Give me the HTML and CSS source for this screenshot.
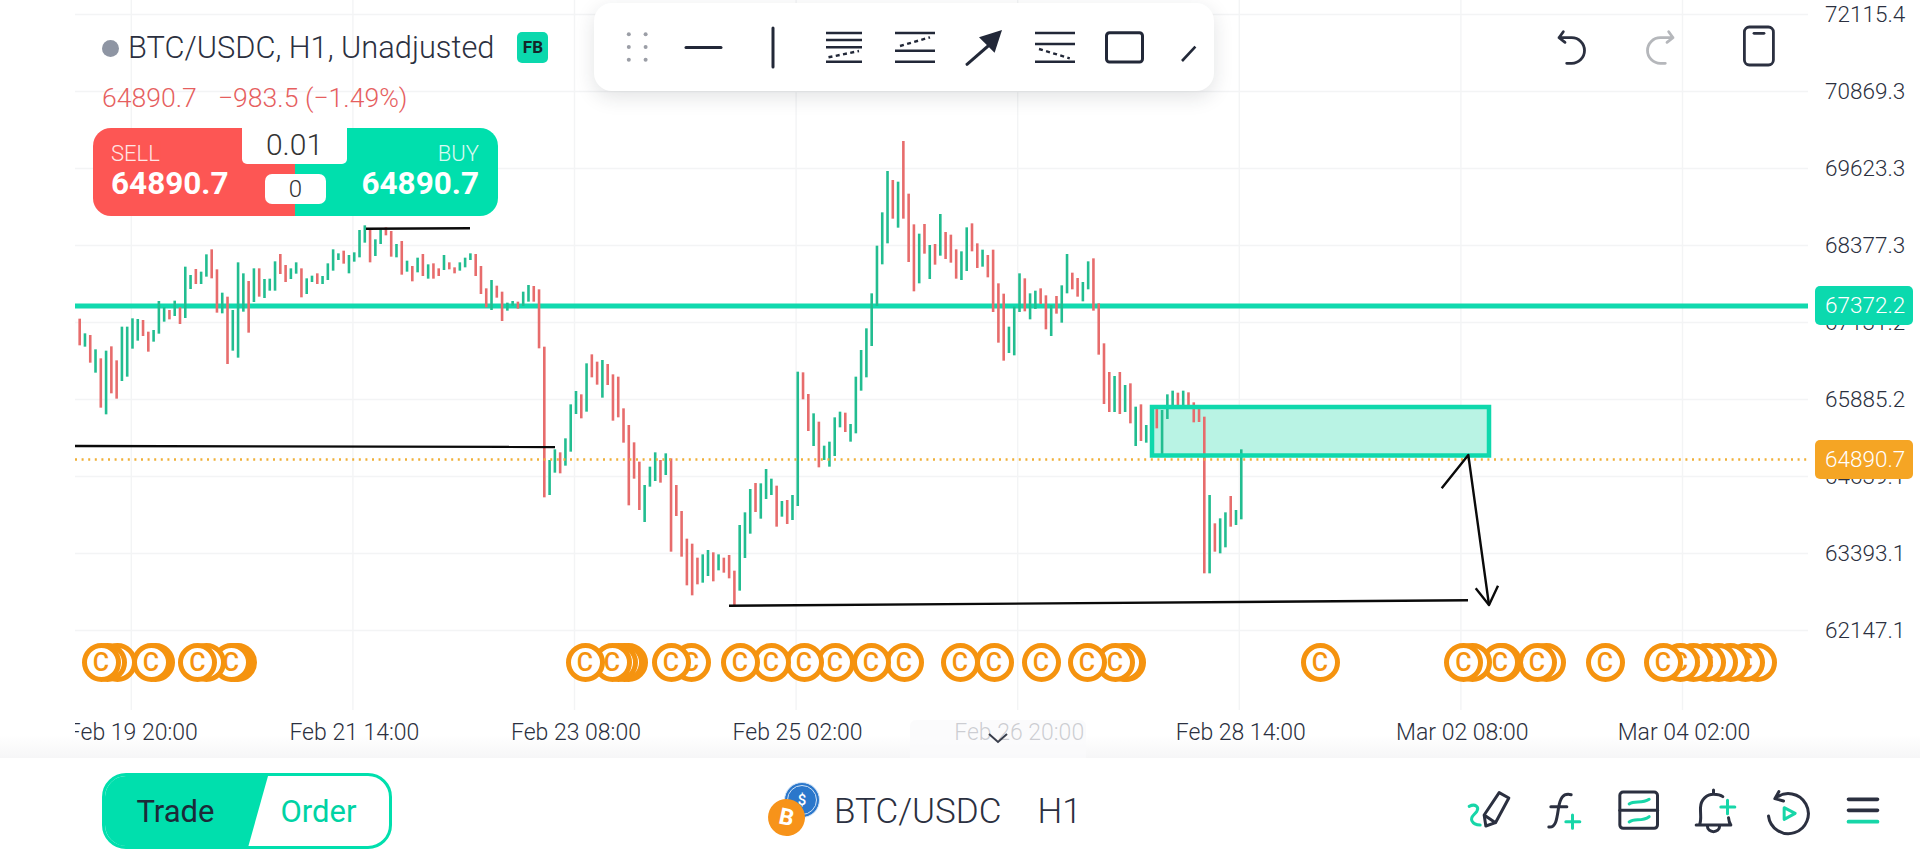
FILE: index.html
```html
<!DOCTYPE html>
<html lang="en">
<head>
<meta charset="utf-8">
<title>BTC/USDC H1</title>
<link rel="stylesheet" href="styles.css">
</head>
<body>
<div class="app">
  <main class="chart">
    <svg class="plot" id="plot" width="1920" height="758" viewBox="0 0 1920 758">
      <g class="grid" id="grid"></g>
      <rect class="zone-fill" x="1152" y="407" width="337" height="48.5"/>
      <line class="level" x1="75" y1="306" x2="1808" y2="306"/>
      <g id="bars"></g>
      <rect class="zone-edge" x="1152" y="407" width="337" height="48.5"/>
      <line class="last" x1="75" y1="459.5" x2="1808" y2="459.5"/>
      <g class="ink">
        <path d="M366 228.7L470 228.3"/>
        <path d="M75 446L555 447"/>
        <path d="M729 605.7L1468 600.3"/>
        <path d="M1441.7 488.3L1468.3 455L1489 605"/>
        <path d="M1475.7 588.3L1489 605L1498 585.7"/>
      </g>
    </svg>

    <div class="coins" id="coins"></div>

    <div class="price-axis">
      <span>72115.4</span><span>70869.3</span><span>69623.3</span><span>68377.3</span><span>67131.2</span><span>65885.2</span><span>64639.1</span><span>63393.1</span><span>62147.1</span>
    </div>
    <div class="tag tag-level">67372.2</div>
    <div class="tag tag-last">64890.7</div>

    <div class="time-axis">
      <div class="time-row">
        <span>Feb 19 20:00</span><span>Feb 21 14:00</span><span>Feb 23 08:00</span><span>Feb 25 02:00</span><span>Feb 26 20:00</span><span>Feb 28 14:00</span><span>Mar 02 08:00</span><span>Mar 04 02:00</span>
      </div>
    </div>
    <div class="collapse">
      <svg width="24" height="12" viewBox="0 0 24 12"><path d="M3 2L12 10L21 2"/></svg>
    </div>

    <header class="legend">
      <div class="legend-title">
        <i class="status-dot"></i>
        <span>BTC/USDC, H1, Unadjusted</span>
        <b class="fb">FB</b>
      </div>
      <div class="legend-quote"><span>64890.7</span><span>−983.5 (−1.49%)</span></div>
      <div class="ticket">
        <div class="side sell"><small>SELL</small><strong>64890.7</strong></div>
        <div class="side buy"><small>BUY</small><strong>64890.7</strong></div>
        <div class="lots">0.01</div>
        <div class="spread">0</div>
      </div>
    </header>

    <nav class="tools">
      <svg class="tool" viewBox="-25 -25 50 50"><g class="dots"><circle cx="-3.2" cy="-12.7" r="2"/><circle cx="13.6" cy="-12.7" r="2"/><circle cx="-3.2" cy="0" r="2"/><circle cx="13.6" cy="0" r="2"/><circle cx="-3.2" cy="12.7" r="2"/><circle cx="13.6" cy="12.7" r="2"/></g></svg>
      <svg class="tool" viewBox="-25 -25 50 50"><path class="st" d="M-18 0.5H17"/></svg>
      <svg class="tool" viewBox="-25 -25 50 50"><path class="st" d="M0 -19V20"/></svg>
      <svg class="tool" viewBox="-25 -25 50 50"><path class="st th" d="M-18 -14H18M-18 -7H18M-18 0.3H18M-18 14.7H18"/><path class="dash" d="M-15.5 10.3L15 4"/></svg>
      <svg class="tool" viewBox="-25 -25 50 50"><path class="st th" d="M-20 -14H20M-20 3.7H20M-20 14.7H20"/><path class="dash" d="M-15 -1L15 -9.7"/></svg>
      <svg class="tool" viewBox="-25 -25 50 50"><path class="st" d="M-20 17.3L8 -7"/><path class="fillp" d="M15 -17L-8 -9.7L7.6 5.7Z"/></svg>
      <svg class="tool" viewBox="-25 -25 50 50"><path class="st th" d="M-21 -14H19M-21 -3H19M-21 14.7H19"/><path class="dash" d="M-17 2L13.8 11.3"/></svg>
      <svg class="tool" viewBox="-25 -25 50 50"><rect class="st" x="-16.5" y="-14.3" width="36" height="29.3" rx="3"/></svg>
      <svg class="tool" viewBox="-25 -25 50 50"><path class="st butt" d="M-3 14L10.4 -0.3"/></svg>
    </nav>

    <div class="actions">
      <svg class="act undo" viewBox="0 0 44 44"><path d="M13.3 3.7L9 9.7L15 14.3M9 9.7H21.7a12.8 12.8 0 0 1 0 25.6H16.7"/></svg>
      <svg class="act redo" viewBox="0 0 44 44"><path d="M30.7 3.7L35 9.7L29 14.3M35 9.7H22.3a12.8 12.8 0 0 0 0 25.6H27.3"/></svg>
      <svg class="act device" viewBox="0 0 44 44"><rect x="7.4" y="-1" width="29" height="38" rx="5"/><path d="M17 5.3H27"/></svg>
    </div>
  </main>

  <footer class="nav">
    <div class="toggle">
      <span class="toggle-on">Trade</span>
      <span class="toggle-off">Order</span>
    </div>
    <div class="symbol">
      <div class="pair">
        <span class="coin-usdc">$</span>
        <span class="coin-btc">B</span>
      </div>
      <span class="symbol-name">BTC/USDC</span>
      <span class="symbol-tf">H1</span>
    </div>
    <div class="nav-icons">
      <svg class="nav-icon" viewBox="92.5 80 225 150"><path class="tl" d="M147 141C165 132 178 142 170 156C162 168 150 172 155 184C160 195 170 197 180 197"/><path class="dk" d="M192 167L237 100L266 116L226 190L197 200ZM192 167L226 190"/></svg>
      <svg class="nav-icon" viewBox="322.5 80 225 150"><path class="dk" d="M458 106C432 100 425 118 420 146C415 180 412 206 391 203M397 142H445"/><path class="tl" d="M462 167V207M442 187H484"/></svg>
      <svg class="nav-icon" viewBox="543.5 80 225 150"><rect class="dk" x="600" y="98" width="113" height="109" rx="10"/><path class="dk" d="M600 153H713"/><path class="tl" d="M628 134C645 122 665 135 688 120M628 188C645 176 665 188 688 172"/></svg>
      <svg class="nav-icon" viewBox="767.5 80 225 150"><path class="dk" d="M828 197H932M838 197C845 180 840 165 841 145C842 120 860 105 880 105C890 105 900 106 908 112M925 175C926 185 928 192 932 197M880 92V105M862 202A18 15 0 0 0 898 202"/><path class="tl" d="M922 123V163M902 143H944"/></svg>
      <svg class="nav-icon" viewBox="992.5 80 225 150"><path class="dk" d="M1066 117A60 60 0 1 1 1045 170M1076 97L1064 118L1090 125"/><path class="tl" d="M1092 145L1125 162L1092 180Z"/></svg>
      <svg class="nav-icon" viewBox="1217.5 80 225 150"><path class="dk bar" d="M1285 120H1372M1285 153H1372"/><path class="tl bar" d="M1285 187H1372"/></svg>
    </div>
  </footer>
</div>
<script src="chart.js"></script>
</body>
</html>
```

FILE: styles.css
```css
* { box-sizing: border-box; }
html, body { margin: 0; padding: 0; background: #fff; overflow: hidden; }
body { font-family: Roboto, "Noto Sans", "Liberation Sans", sans-serif; color: #2b3040; }
.app { width: 1920px; height: 864px; display: flex; flex-direction: column; }

.chart { position: relative; height: 758px; flex: none; overflow: hidden; background: linear-gradient(#fff 735px, #f6f6f7 758px); }
.plot { position: absolute; left: 0; top: 0; }
.grid line { stroke: #f3f4f5; stroke-width: 1.4; }
.zone-fill { fill: #b9f3e4; }
.zone-edge { fill: none; stroke: #0fd8ac; stroke-width: 4.5; }
.level { stroke: #11d9ae; stroke-width: 5; }
.last { stroke: #f0b038; stroke-width: 2.4; stroke-dasharray: 2 4.6; }
.ink path { fill: none; stroke: #0a0a0a; stroke-width: 2.4; stroke-linejoin: round; }
.bar-red { stroke: #e76c6c; stroke-width: 2.6; }
.bar-green { stroke: #22bd90; stroke-width: 2.6; }

.coins { position: absolute; left: 0; top: 0; width: 100%; height: 100%; pointer-events: none; }
.coin { position: absolute; top: 642.5px; width: 39px; height: 39px; border: 5px solid #f5930f; border-radius: 50%; background: #fff; color: #f5930f; font-size: 25px; font-weight: 500; line-height: 29px; text-align: center; }

.price-axis { position: absolute; left: 1825px; top: -24px; display: flex; flex-direction: column; font-size: 22.5px; font-weight: 300; }
.price-axis span { height: 77px; line-height: 77px; color: #2b3040; }
.tag { position: absolute; left: 1815px; width: 98px; height: 39px; border-radius: 5px; color: #fff; font-size: 22.5px; font-weight: 300; line-height: 39px; padding-left: 10px; }
.tag-level { top: 286px; background: #0bd9ae; }
.tag-last { top: 440px; background: #f5a524; }

.time-axis { position: absolute; left: 75px; top: 718px; width: 1733px; height: 30px; overflow: hidden; }
.time-row { display: flex; margin-left: -53px; }
.time-row span { flex: 0 0 221.6px; text-align: center; font-size: 23px; font-weight: 300; line-height: 30px; color: #2b3040; white-space: nowrap; }
.collapse { position: absolute; left: 910px; top: 720px; width: 176px; height: 38px; border-radius: 6px 6px 0 0; background: rgba(250,250,251,.78); display: flex; justify-content: center; padding-top: 12px; }
.collapse path { fill: none; stroke: #3a3f4c; stroke-width: 2; }

.legend { position: absolute; left: 93px; top: 25px; width: 470px; }
.legend-title { display: flex; align-items: center; height: 44px; margin-left: 9px; font-size: 30.8px; font-weight: 300; color: #2b3040; }
.status-dot { width: 17px; height: 17px; border-radius: 50%; background: #8e95a3; margin-right: 9px; margin-top: 3px; }
.fb { margin-left: 23px; width: 31px; height: 31px; border-radius: 5px; background: #0bd8ad; color: #14252a; font-size: 17px; line-height: 31px; text-align: center; font-weight: 700; }
.legend-quote { display: flex; gap: 21px; margin-left: 9px; margin-top: 7px; font-size: 26.6px; font-weight: 300; line-height: 44px; height: 44px; color: #e65f5f; }

.ticket { position: relative; width: 405px; height: 88px; margin-top: 8px; border-radius: 18px; overflow: hidden; display: flex; color: #fff; }
.side { display: flex; flex-direction: column; padding-top: 12px; }
.side small { font-size: 22px; font-weight: 300; line-height: 28px; opacity: .85; }
.side strong { font-size: 31.5px; font-weight: 700; line-height: 32px; }
.sell { width: 202px; background: #fd5654; padding-left: 18px; }
.buy { flex: 1; background: #00dfad; align-items: flex-end; padding-right: 19px; }
.lots { position: absolute; left: 149px; top: 0; width: 105px; height: 36px; background: #fff; border-radius: 0 0 5px 5px; color: #333; font-size: 30px; font-weight: 300; line-height: 33px; text-align: center; }
.spread { position: absolute; left: 172px; top: 46px; width: 61px; height: 30px; background: #fff; border-radius: 7px; color: #333; font-size: 24px; font-weight: 300; line-height: 30px; text-align: center; }

.tools { position: absolute; left: 593.5px; top: 3px; width: 620px; height: 88px; background: #fff; border-radius: 18px; box-shadow: 0 6px 20px rgba(30,35,50,.13); display: grid; grid-template-columns: 76.2px 68.1px 70.5px 70.5px 73.2px 70.3px 67.5px 67.2px 56.4px; align-items: center; }
.tool { width: 50px; height: 50px; justify-self: center; overflow: visible; }
.st { fill: none; stroke: #222838; stroke-width: 3; stroke-linecap: round; stroke-linejoin: round; }
.st.th { stroke-width: 2.6; stroke-linecap: butt; }
.st.butt { stroke-width: 2.6; stroke-linecap: butt; }
.dash { fill: none; stroke: #222838; stroke-width: 2.4; stroke-dasharray: 4 3.4; }
.fillp { fill: #222838; }
.dots circle { fill: #9b9ea6; }

.actions { position: absolute; left: 1550px; top: 28px; display: flex; gap: 44px; }
.act { width: 44px; height: 44px; overflow: visible; }
.act path, .act rect { fill: none; stroke: #2b3040; stroke-width: 2.8; stroke-linecap: round; stroke-linejoin: round; }
.redo path { stroke: #b5b7bb; }
.device { margin-left: 11px; }

.nav { height: 106px; flex: none; display: flex; align-items: center; padding: 0 19.5px 0 102px; background: #fff; }
.toggle { position: relative; width: 290px; height: 76px; border: 3px solid #00dfad; border-radius: 24px; overflow: hidden; display: flex; align-items: center; font-size: 31px; background: #fff; }
.toggle::before { content: ""; position: absolute; left: 0; top: 0; bottom: 0; width: 163px; background: #00dfad; clip-path: polygon(0 0, 100% 0, 88% 100%, 0 100%); }
.toggle-on { position: relative; width: 141px; text-align: center; font-weight: 400; color: #1c2a38; }
.toggle-off { position: relative; flex: 1; text-align: center; font-weight: 400; color: #00d3a4; padding-left: 2px; }

.symbol { display: flex; align-items: center; margin-left: 376px; font-size: 35px; font-weight: 300; color: #2b3040; }
.pair { position: relative; width: 54px; height: 58px; margin-right: 12px; }
.coin-usdc { position: absolute; left: 16px; top: 0; width: 36px; height: 36px; border-radius: 50%; background: #2b77cb; border: 4px double #cfe2f6; color: #fff; font-size: 15px; font-weight: 500; line-height: 28px; text-align: center; }
.coin-btc { position: absolute; left: 0; top: 17px; width: 37px; height: 37px; border-radius: 50%; background: #f7931a; color: #fff; font-size: 23px; font-weight: 700; line-height: 37px; text-align: center; transform: rotate(12deg); }
.symbol-tf { margin-left: 36px; }

.nav-icons { margin-left: auto; display: flex; }
.nav-icon { width: 75px; height: 50px; }
.dk, .tl { fill: none; stroke-width: 9; stroke-linecap: round; stroke-linejoin: round; }
.dk { stroke: #2b3040; }
.tl { stroke: #17d6a8; }
.bar { stroke-width: 11; }
```

FILE: chart.js
```js
(function () {
  var NS = 'http://www.w3.org/2000/svg';
  var X0 = 74.4, STEP = 5.28;
  var R = 'r', G = 'g';

  // [colour, top, bottom] in crop units; each set is [originY, scale, rows]
  var sets = [
    [220, 3, [
      [R,295,372],[R,296,376],[G,340,380],[R,345,428],[G,388,458],[R,415,563],[G,392,583],[R,379,520],[R,421,536],[G,320,483],
      [G,320,470],[G,295,386],[G,297,362],[R,300,348],[R,335,395],[G,330,365],[G,243,341],[G,262,305],[R,270,298],[G,242,288],
      [R,262,312],[G,140,294],[G,165,207],[R,147,192],[G,155,192],[G,103,170],[R,88,175],[R,148,278],[G,218,280],[R,230,432],
      [G,270,392],[G,127,413],[G,160,275],[R,183,338],[G,145,246],[R,145,230],[G,177,234],[G,176,212],[G,124,212],[R,102,162],
      [R,135,186],[G,145,177],[G,127,161],[R,145,232],[G,175,222],[G,167,186],[R,160,192],[G,168,192],[G,130,180],[G,88,152],
      [G,100,120],[R,92,131],[G,105,160],[G,97,125],[G,30,112],[G,16,68],[R,28,127],[G,58,108],[G,28,72],[R,22,46],
      [R,33,110],[G,72,112],[R,63,164],[G,122,155],[R,138,184],[G,113,157],[R,102,168],[G,133,176],[R,130,176],[R,145,168],
      [G,105,150],[R,127,148],[R,142,160],[G,127,152],[G,113,142],[G,100,120],[R,102,168],[R,138,222],[R,205,262],[G,180,270],
      [R,197,233],[R,215,303],[G,248,272],[G,243,257],[R,245,266],[G,215,258],[G,195,245],[R,198,245],[R,208,385]
    ]],
    [320, 3, [
      [R,80,532],[G,420,525],[G,388,458],[R,397,460],[G,355,437],[G,253,395],[G,213,282],[R,223,295],[G,130,275],[R,103,172],
      [R,125,194],[G,120,233],[R,132,195],[R,163,302],[R,170,292],[R,265,368],[R,315,556],[R,367,476],[R,425,570],[G,495,606],
      [G,440,500],[G,397,483],[R,420,488],[G,400,465],[R,415,695],[R,495,588],[R,573,710],[R,656,796],[R,671,826],[R,713,793],
      [G,703,788],[G,690,768],[R,697,784],[G,703,751],[R,713,758],[R,705,775],[R,752,860],[G,615,812],[G,577,714],[G,507,641],
      [R,489,576],[G,490,596],[G,447,537],[G,476,525],[R,497,620],[G,543,590],[R,540,612],[G,525,600],[G,155,558],[R,157,238],
      [R,222,333],[G,280,378],[R,305,442],[G,377,420],[G,365,440],[G,292,408],[G,275,322],[R,278,336],[G,312,365],[G,170,340],
      [G,90,212],[G,25,172]
    ]],
    [130, 3, [
      [G,490,648],[G,347,528],[G,247,403],[G,123,340],[R,150,266],[G,155,293],[R,33,266],[R,191,396],[R,283,484],[G,311,460],
      [R,282,371],[G,345,447],[R,342,404],[G,252,377],[R,306,387],[R,314,398],[R,358,446],[G,364,450],[G,292,423],[R,280,364],
      [R,340,414],[G,359,410],[R,375,442],[R,359,546],[R,460,638],[R,491,692],[G,590,669],[G,530,676],[G,430,546],[R,445,544],
      [G,490,568],[G,482,537],[R,475,522],[R,496,598],[G,525,618],[R,498,551],[G,466,578],[G,372,490],[R,428,478],[R,444,500],
      [G,456,514],[G,394,478],[R,385,542],[R,520,674],[R,640,822]
    ]],
    [0, 1, [[R,372,412],[G,376,412],[R,372,414],[G,385,412]]],
    [360, 3, [
      [R,70,190],[G,140,258],[R,133,243],[G,195,248],[G,135,205],[R,143,205],[G,150,285],[G,103,177],[G,92,140],[R,98,140],
      [G,92,138],[R,97,138],[R,127,187],[R,145,186],[R,170,640],[G,405,640],[R,490,575],[G,475,580],[G,457,562],[R,408,500],
      [G,450,495],[G,268,478]
    ]]
  ];

  function line(parent, cls, x1, y1, x2, y2) {
    var el = document.createElementNS(NS, 'line');
    if (cls) el.setAttribute('class', cls);
    el.setAttribute('x1', x1); el.setAttribute('y1', y1);
    el.setAttribute('x2', x2); el.setAttribute('y2', y2);
    parent.appendChild(el);
  }

  var grid = document.getElementById('grid');
  for (var h = 0; h < 9; h++) { var y = 14.5 + 77 * h; line(grid, '', 75, y, 1808, y); }
  for (var v = 0; v < 8; v++) { var x = 131.3 + 221.6 * v; line(grid, '', x, 0, x, 710); }

  var bars = document.getElementById('bars');
  var i = 0;
  sets.forEach(function (set) {
    set[2].forEach(function (row) {
      var bx = X0 + STEP * i;
      if (bx >= 75) {
        line(bars, row[0] === R ? 'bar-red' : 'bar-green', bx, set[0] + row[1] / set[1], bx, set[0] + row[2] / set[1]);
      }
      i++;
    });
  });

  // Leftmost coin sits on top, so draw from the right.
  var centres = [101,107,117,151,155,197.5,206,231,234,237,585,612,618,624,628,671,691,740,771,804,835,871,904,960,994,1041,1087,1115,1124,1126,1320,1463.5,1472,1500,1502,1537,1546,1605,1663,1680,1693,1706,1718,1730,1745,1757];
  var host = document.getElementById('coins');
  centres.slice().reverse().forEach(function (c) {
    var d = document.createElement('div');
    d.className = 'coin';
    d.textContent = 'C';
    d.style.left = (c - 19.5) + 'px';
    host.appendChild(d);
  });
})();
```
